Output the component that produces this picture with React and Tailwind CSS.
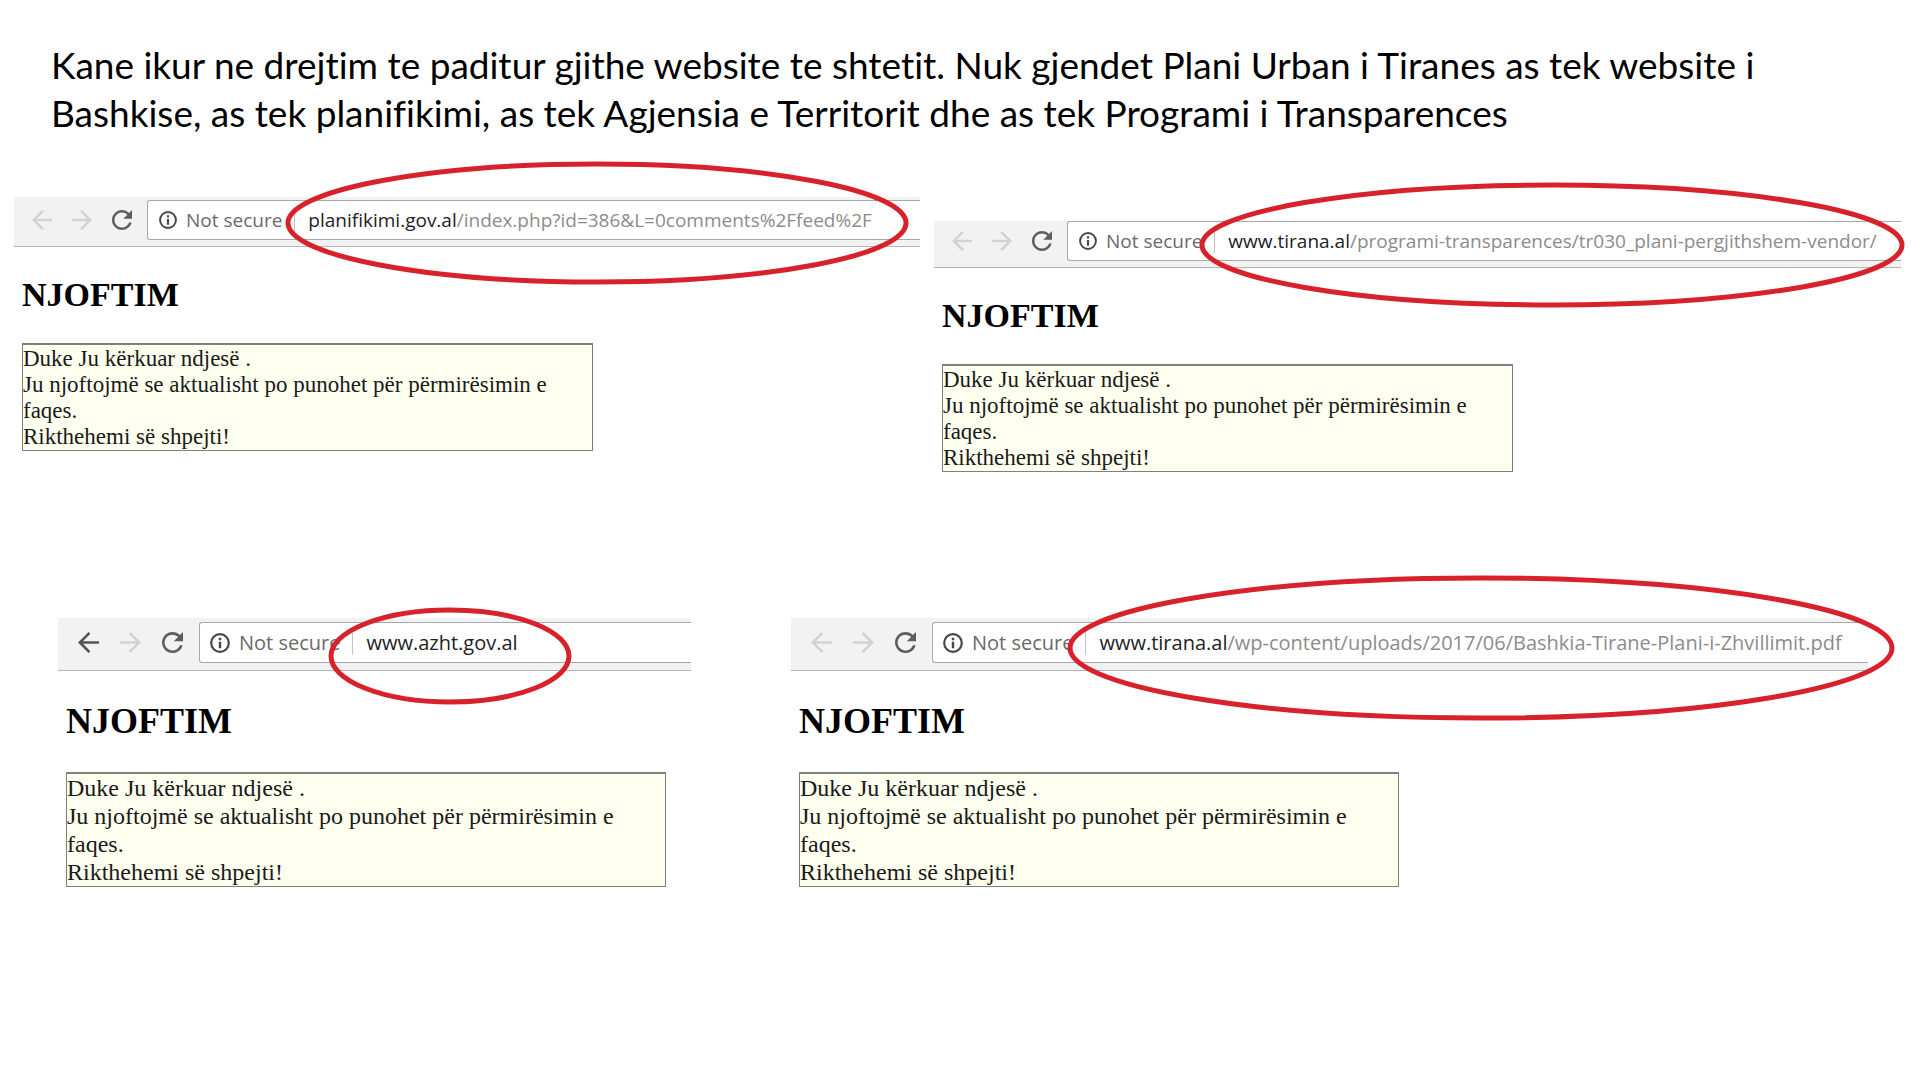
import React from 'react';

// One entry per captured browser window
const CAPTURES = {
  planifikimi: {
    host: 'planifikimi.gov.al',
    path: '/index.php?id=386&L=0comments%2Ffeed%2F',
    ring: 'left-[274px] -top-[33px] w-[618px] h-[118px]',
  },
  programi: {
    host: 'www.tirana.al',
    path: '/programi-transparences/tr030_plani-pergjithshem-vendor/',
    ring: 'left-[268px] -top-[36px] w-[700px] h-[120px]',
    flushTop: true,
  },
  azht: {
    host: 'www.azht.gov.al',
    path: '',
    ring: 'left-[273px] -top-[8px] w-[238px] h-[92px]',
    canGoBack: true,
    large: true,
  },
  uploads: {
    host: 'www.tirana.al',
    path: '/wp-content/uploads/2017/06/Bashkia-Tirane-Plani-i-Zhvillimit.pdf',
    ring: 'left-[279px] -top-[40px] w-[822px] h-[140px]',
    large: true,
  },
};

const NOTICE_LINES = [
  'Duke Ju kërkuar ndjesë .',
  'Ju njoftojmë se aktualisht po punohet për përmirësimin e faqes.',
  'Rikthehemi së shpejti!',
];

function ArrowIcon({ className }) {
  return (
    <svg viewBox="4 4 16 16" fill="currentColor" aria-hidden="true" className={className}>
      <path d="M20 11H7.83l5.59-5.59L12 4l-8 8 8 8 1.41-1.41L7.83 13H20v-2z" />
    </svg>
  );
}

function ReloadIcon({ className }) {
  return (
    <svg viewBox="4 4 16 16" fill="currentColor" aria-hidden="true" className={className}>
      <path d="M17.65 6.35C16.2 4.9 14.21 4 12 4c-4.42 0-7.99 3.58-7.99 8s3.57 8 7.99 8c3.73 0 6.84-2.55 7.73-6h-2.08c-.82 2.33-3.04 4-5.65 4-3.31 0-6-2.69-6-6s2.69-6 6-6c1.66 0 3.14.69 4.22 1.78L13 11h7V4l-2.35 2.35z" />
    </svg>
  );
}

function InfoIcon({ className }) {
  return (
    <svg viewBox="0 0 20 20" aria-hidden="true" className={className}>
      <circle cx="10" cy="10" r="8.8" fill="none" stroke="currentColor" strokeWidth="2.2" />
      <path d="M8.8 4.8h2.4v2.4H8.8zM8.8 8.8h2.4v6.4H8.8z" fill="currentColor" />
    </svg>
  );
}

// Red marker ring drawn over the address
function MarkerRing({ className }) {
  return (
    <svg aria-hidden="true" className={`pointer-events-none absolute overflow-visible ${className}`}>
      <ellipse cx="50%" cy="50%" rx="50%" ry="50%" fill="none" stroke="#d8222b" strokeWidth="5" />
    </svg>
  );
}

function AddressBar({ id, host, path, ring, canGoBack, flushTop, large }) {
  const icon = large ? 'size-[21px]' : 'size-5';

  return (
    <div className={`relative flex border-b border-[#b4b4b4] bg-[#f2f2f2] ${large ? 'pt-1 pb-[7px]' : 'pb-1.5'} ${large || flushTop ? '' : 'pt-[3px]'}`}>
      <div className={`flex shrink-0 items-center ${large ? 'gap-[21px] pl-5 pr-4' : 'gap-5 pl-[18px] pr-[15px]'}`}>
        <button type="button" aria-label="Back" disabled={!canGoBack} className={canGoBack ? 'text-[#555555]' : 'text-[#d2d2d2]'}>
          <ArrowIcon className={icon} />
        </button>
        <button type="button" aria-label="Forward" disabled className="text-[#d2d2d2]">
          <ArrowIcon className={`${icon} rotate-180`} />
        </button>
        <button type="button" aria-label="Reload" className="text-[#5e5e5e]">
          <ReloadIcon className={icon} />
        </button>
      </div>

      <div className={`flex min-w-0 flex-1 items-center rounded-l-[3px] border-y border-l border-[#a9a9a9] bg-white font-['Open_Sans',sans-serif] [font-variant-ligatures:none] ${large ? 'h-[41px] pl-2.5 text-[20px]' : 'h-10 pl-[11px] text-[19px]'}`}>
        <InfoIcon className={`shrink-0 text-[#484848] ${large ? 'size-5' : 'size-[18px]'}`} />
        <span className="ml-[9px] whitespace-nowrap text-[#6a6a6a]">Not secure</span>
        <span className="ml-3 mr-[13px] h-6 w-px shrink-0 bg-[#c4c4c4]" />
        {path && <label htmlFor={id} className="whitespace-nowrap text-[#222222]">{host}</label>}
        <input
          id={id}
          type="text"
          aria-label={host + path}
          defaultValue={path || host}
          spellCheck={false}
          className={`min-w-0 flex-1 bg-transparent outline-none ${path ? 'text-[#8c8c8c]' : 'text-[#222222]'}`}
        />
      </div>

      <MarkerRing className={ring} />
    </div>
  );
}

function Capture({ id, className = '' }) {
  const capture = CAPTURES[id];
  const { large } = capture;

  return (
    <section className={`min-w-0 ${className}`}>
      <AddressBar id={id} {...capture} />
      <div className={`pl-2 font-['Liberation_Serif',serif] text-black ${large ? 'pt-[29px]' : 'pt-7'}`}>
        <h2 className={`font-bold ${large ? 'mb-[30px] text-[36px] leading-[42px]' : 'mb-7 text-[34px] leading-10'}`}>NJOFTIM</h2>
        <div className={`max-w-full border border-t-2 border-[#808080] bg-[#feffef] text-[#1a1a1a] ${large ? 'w-[600px] text-[24px] leading-[28px]' : 'w-[571px] pt-px text-[23px] leading-[26px]'}`}>
          {NOTICE_LINES.map((line) => (
            <p key={line}>{line}</p>
          ))}
        </div>
      </div>
    </section>
  );
}

function App() {
  return (
    <main className="min-h-screen overflow-x-hidden bg-white pb-10 pt-[41px]">
      <h1 className="pl-[51px] pr-[120px] font-['Lato',sans-serif] text-[37px] leading-[48px] text-black [font-variant-ligatures:none]">
        Kane ikur ne drejtim te paditur gjithe website te shtetit. Nuk gjendet Plani Urban i Tiranes as tek website i
        Bashkise, as tek planifikimi, as tek Agjensia e Territorit dhe as tek Programi i Transparences
      </h1>

      <div className="mt-[60px] grid grid-cols-[906fr_967fr] gap-3.5 pl-3.5 pr-[19px]">
        <Capture id="planifikimi" />
        <Capture id="programi" className="mt-6" />
      </div>

      <div className="mt-[146px] grid grid-cols-[633fr_1077fr] gap-[100px] pl-[58px] pr-[52px]">
        <Capture id="azht" />
        <Capture id="uploads" />
      </div>
    </main>
  );
}

export default App;
